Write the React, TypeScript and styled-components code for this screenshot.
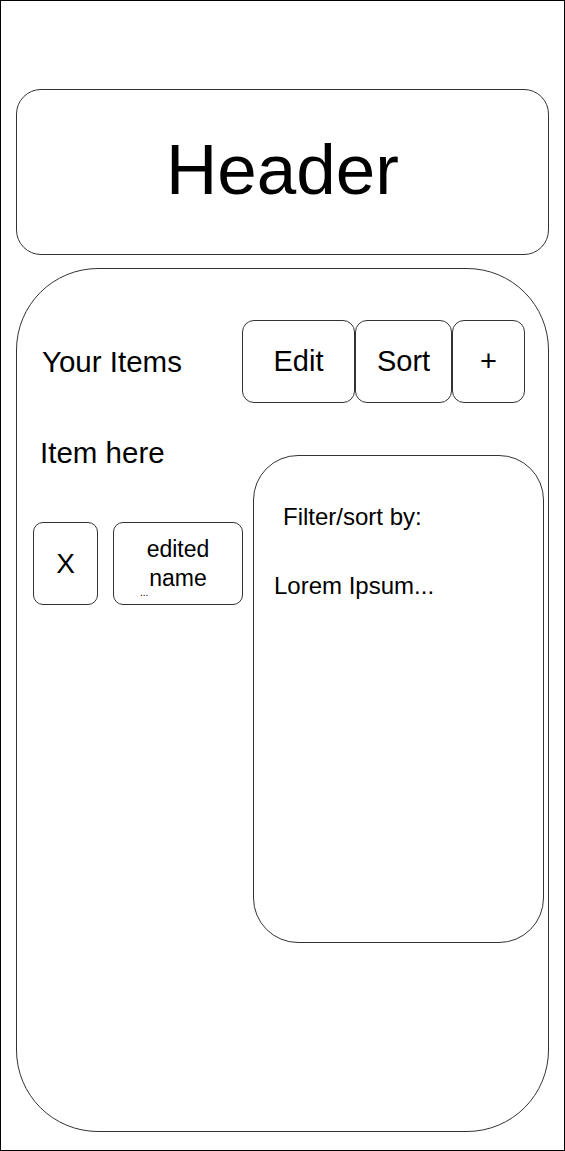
import React from "react";
import styled, { createGlobalStyle } from "styled-components";

const GlobalStyle = createGlobalStyle`
  html, body {
    margin: 0;
    padding: 0;
    background: #fff;
  }
  body {
    font-family: "Liberation Sans", Arial, Helvetica, sans-serif;
    color: #000;
  }
  * {
    box-sizing: border-box;
  }
`;

const Frame = styled.div`
  width: 565px;
  height: 1151px;
  border: 1px solid #000;
  padding: 88px 15px 0 15px;
  display: flex;
  flex-direction: column;
`;

const HeaderBox = styled.header`
  height: 166px;
  border: 1px solid #333;
  border-radius: 25px;
  display: flex;
  align-items: center;
  justify-content: center;
  font-size: 71px;
  line-height: 1;
  padding-bottom: 5px;
`;

const MainBox = styled.main`
  margin-top: 13px;
  height: 864px;
  border: 1px solid #333;
  border-radius: 82px;
  padding-top: 51px;
  display: flex;
  flex-direction: column;
`;

const Toolbar = styled.div`
  display: flex;
  align-items: center;
  justify-content: space-between;
  padding: 0 23px 0 25px;
`;

const Title = styled.h2`
  margin: 0;
  font-size: 29.5px;
  font-weight: 400;
`;

const ButtonGroup = styled.div`
  display: flex;
`;

const ToolButton = styled.button<{ $w: number }>`
  width: ${(p) => p.$w}px;
  height: 83px;
  border: 1px solid #333;
  border-radius: 12px;
  background: #fff;
  font-family: inherit;
  font-size: 29px;
  color: #000;
  padding: 0;
  display: flex;
  align-items: center;
  justify-content: center;
`;

const Body = styled.div`
  margin-top: 29px;
  display: flex;
  align-items: flex-start;
`;

const ItemsCol = styled.div`
  width: 236px;
  padding-left: 16px;
  display: flex;
  flex-direction: column;
`;

const ItemLabel = styled.div`
  padding: 4px 0 0 7px;
  font-size: 29.5px;
  line-height: 33px;
`;

const ItemRow = styled.div`
  margin-top: 53px;
  display: flex;
  gap: 15px;
`;

const ItemButton = styled.button<{ $w: number; $size: number }>`
  position: relative;
  width: ${(p) => p.$w}px;
  height: 83px;
  border: 1px solid #333;
  border-radius: 10px;
  background: #fff;
  font-family: inherit;
  font-size: ${(p) => p.$size}px;
  line-height: 29px;
  color: #000;
  padding: 0;
  display: flex;
  align-items: center;
  justify-content: center;
  text-align: center;
`;

const Ellipsis = styled.span`
  position: absolute;
  left: 26px;
  bottom: 6px;
  font-size: 10px;
  line-height: 1;
`;

const FilterPanel = styled.aside`
  margin-top: 23px;
  width: 291px;
  height: 488px;
  border: 1px solid #333;
  border-radius: 45px;
  padding: 47px 20px 0 20px;
  display: flex;
  flex-direction: column;
`;

const PanelHeading = styled.div`
  padding-left: 9px;
  font-size: 24px;
  line-height: 27px;
`;

const PanelText = styled.div`
  margin-top: 42px;
  font-size: 24px;
  line-height: 27px;
`;

export default function App() {
  return (
    <>
      <GlobalStyle />
      <Frame>
        <HeaderBox>Header</HeaderBox>
        <MainBox>
          <Toolbar>
            <Title>Your Items</Title>
            <ButtonGroup>
              <ToolButton $w={113}>Edit</ToolButton>
              <ToolButton $w={97}>Sort</ToolButton>
              <ToolButton $w={73}>+</ToolButton>
            </ButtonGroup>
          </Toolbar>
          <Body>
            <ItemsCol>
              <ItemLabel>Item here</ItemLabel>
              <ItemRow>
                <ItemButton $w={65} $size={28}>X</ItemButton>
                <ItemButton $w={130} $size={23}>
                  edited
                  <br />
                  name
                  <Ellipsis>...</Ellipsis>
                </ItemButton>
              </ItemRow>
            </ItemsCol>
            <FilterPanel>
              <PanelHeading>Filter/sort by:</PanelHeading>
              <PanelText>Lorem Ipsum...</PanelText>
            </FilterPanel>
          </Body>
        </MainBox>
      </Frame>
    </>
  );
}
